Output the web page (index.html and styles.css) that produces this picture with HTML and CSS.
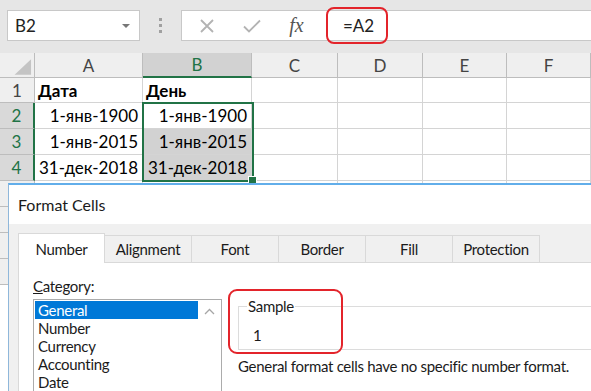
FILE: index.html
```html
<!DOCTYPE html>
<html lang="ru">
<head>
  <meta charset="UTF-8" />
  <title>Excel — Format Cells</title>
  <link rel="stylesheet" href="styles.css">
</head>
<body>
  <div class="app">
    <div class="topbar">
      <div class="namebox"><span>B2</span><span class="caret"></span></div>
      <div class="grip"><i></i><i></i><i></i></div>
      <div class="formula">
        <span class="ficon">
          <svg width="16" height="16" viewBox="0 0 16 16"><path d="M2 2L14 14M14 2L2 14" stroke="#b3b3b3" stroke-width="1.8" fill="none"/></svg>
        </span>
        <span class="ficon">
          <svg width="18" height="14" viewBox="0 0 18 14"><path d="M1 7.5L6 12.5L17 1.5" stroke="#b3b3b3" stroke-width="1.8" fill="none"/></svg>
        </span>
        <span class="ficon fx">fx</span>
        <span class="fvalue">=A2</span>
      </div>
    </div>

    <div class="sheet">
      <div class="cell corner">
        <svg width="35" height="25" viewBox="0 0 35 25"><polygon points="15,22 32,22 32,6" fill="#c4c4c4"/></svg>
      </div>
      <div class="cell hd">A</div>
      <div class="cell hd sel">B</div>
      <div class="cell hd">C</div>
      <div class="cell hd">D</div>
      <div class="cell hd">E</div>
      <div class="cell hd">F</div>

      <div class="cell rh">1</div>
      <div class="cell txt bold">Дата</div>
      <div class="cell txt bold">День</div>
      <div class="cell"></div><div class="cell"></div><div class="cell"></div><div class="cell"></div>

      <div class="cell rh sel">2</div>
      <div class="cell num">1-янв-1900</div>
      <div class="cell num">1-янв-1900</div>
      <div class="cell"></div><div class="cell"></div><div class="cell"></div><div class="cell"></div>

      <div class="cell rh sel">3</div>
      <div class="cell num">1-янв-2015</div>
      <div class="cell num shade">1-янв-2015</div>
      <div class="cell"></div><div class="cell"></div><div class="cell"></div><div class="cell"></div>

      <div class="cell rh sel">4</div>
      <div class="cell num">31-дек-2018</div>
      <div class="cell num shade">31-дек-2018</div>
      <div class="cell"></div><div class="cell"></div><div class="cell"></div><div class="cell"></div>

      <!-- rows under the dialog: only their left edge shows -->
      <div class="cell rh"></div>
      <div class="cell"></div><div class="cell"></div><div class="cell"></div><div class="cell"></div><div class="cell"></div><div class="cell"></div>
      <div class="cell rh"></div>
      <div class="cell"></div><div class="cell"></div><div class="cell"></div><div class="cell"></div><div class="cell"></div><div class="cell"></div>
      <div class="cell rh"></div>
      <div class="cell"></div><div class="cell"></div><div class="cell"></div><div class="cell"></div><div class="cell"></div><div class="cell"></div>
      <div class="cell rh"></div>
      <div class="cell"></div><div class="cell"></div><div class="cell"></div><div class="cell"></div><div class="cell"></div><div class="cell"></div>

      <div class="selection"><span class="handle"></span></div>
    </div>

    <div class="dialog">
      <div class="title">Format Cells</div>
      <div class="dbody">
        <div class="tabs">
          <div class="tab active">Number</div>
          <div class="tab">Alignment</div>
          <div class="tab">Font</div>
          <div class="tab">Border</div>
          <div class="tab">Fill</div>
          <div class="tab">Protection</div>
        </div>
        <div class="panel">
          <div class="left">
            <div class="cat-label"><u>C</u>ategory:</div>
            <div class="listbox">
              <div class="items">
                <div class="item picked">General</div>
                <div class="item">Number</div>
                <div class="item">Currency</div>
                <div class="item">Accounting</div>
                <div class="item">Date</div>
              </div>
              <div class="scroll">
                <svg width="11" height="7" viewBox="0 0 11 7"><path d="M1 6L5.5 1.5L10 6" stroke="#a6a6a6" stroke-width="1.3" fill="none"/></svg>
              </div>
            </div>
          </div>
          <div class="right">
            <fieldset class="sample">
              <legend>Sample</legend>
              <div class="sample-value">1</div>
            </fieldset>
            <div class="mark"></div>
            <div class="desc">General format cells have no specific number format.</div>
          </div>
        </div>
      </div>
    </div>
  </div>
</body>
</html>
```

FILE: styles.css
```css
body { margin: 0; background: #fff; font-family: Lato, "Noto Sans", sans-serif; }
.app { position: relative; width: 591px; height: 391px; overflow: hidden; }

/* formula bar */
.topbar { display: flex; align-items: flex-start; height: 53px; box-sizing: border-box; padding-top: 10px; background: #e6e6e6; }
.namebox { margin-left: 7px; width: 133px; height: 31px; box-sizing: border-box; border: 1px solid #c8c8c8; background: #fff; display: flex; align-items: center; justify-content: space-between; padding: 0 9px 0 7px; font-size: 17px; color: #222; }
.caret { width: 0; height: 0; border-left: 4px solid transparent; border-right: 4px solid transparent; border-top: 4px solid #777; }
.grip { width: 41px; height: 31px; display: flex; flex-direction: column; align-items: center; justify-content: center; gap: 3px; }
.grip i { width: 3px; height: 3px; background: #a0a0a0; }
.formula { flex: 1; height: 31px; box-sizing: border-box; border: 1px solid #c8c8c8; border-right: none; background: #fff; display: flex; align-items: center; padding-left: 2px; }
.ficon { width: 45px; display: flex; justify-content: center; align-items: center; }
.fx { font-family: "Liberation Serif", serif; font-style: italic; font-size: 20px; color: #555; }
.fvalue { margin-left: 7px; width: 62px; height: 37px; box-sizing: border-box; border: 2px solid #e3242b; border-radius: 8px; padding-left: 15px; display: flex; align-items: center; font-size: 17px; color: #222; }

/* grid */
.sheet { position: relative; display: grid; grid-template-columns: 35px 108px 109px 86px 85px 84px 84px; grid-template-rows: 25px 25px repeat(7, 26px); }
.cell { box-sizing: border-box; border-right: 1px solid #d4d4d4; border-bottom: 1px solid #d4d4d4; font-size: 17px; color: #000; display: flex; align-items: center; white-space: nowrap; overflow: hidden; }
.corner { background: #efefef; border-color: #bdbdbd; }
.hd { background: #efefef; border-right-color: #bdbdbd; border-bottom-color: #bdbdbd; justify-content: center; color: #444; }
.hd.sel { background: #d2d2d2; color: #217346; border-bottom: 2px solid #217346; }
.rh { background: #efefef; border-right-color: #bdbdbd; border-bottom-color: #bdbdbd; justify-content: center; color: #444; }
.rh.sel { background: #d9d9d9; color: #217346; border-right: 2px solid #217346; }
.txt { padding-left: 3px; }
.bold { font-weight: bold; }
.num { justify-content: flex-end; padding-right: 4px; }
.shade { background: #d2d2d2; }
.selection { position: absolute; left: 142px; top: 49px; width: 112px; height: 80px; box-sizing: border-box; border: 2px solid #217346; }
.handle { position: absolute; right: -5px; bottom: -5px; width: 7px; height: 7px; background: #217346; border: 1px solid #fff; }

/* dialog */
.dialog { position: absolute; left: 8px; top: 183px; width: 620px; height: 240px; box-sizing: border-box; border: 1px solid #8fb7da; border-top: 2px solid #62aeea; background: #f0f0f0; font-family: Lato, "Noto Sans", sans-serif; font-size: 15px; letter-spacing: -0.3px; color: #1b1b1b; }
.title { height: 39px; background: #fff; padding-left: 9px; display: flex; align-items: center; font-size: 16px; letter-spacing: 0; }
.dbody { padding: 9px 0 0 9px; }
.tabs { display: flex; align-items: flex-end; height: 29px; }
.tab { width: 87px; height: 27px; box-sizing: border-box; border: 1px solid #d9d9d9; border-left: none; border-bottom: none; display: flex; align-items: center; justify-content: center; }
.tab.active { height: 30px; margin-bottom: -1px; background: #fff; border-left: 1px solid #d9d9d9; position: relative; }
.panel { display: flex; gap: 16px; height: 200px; background: #fff; border: 1px solid #d9d9d9; padding: 14px 0 0 14px; }
.left { width: 189px; flex: none; }
.cat-label { height: 18px; line-height: 18px; margin-bottom: 4px; }
.listbox { display: flex; height: 110px; border: 1px solid #acacac; padding: 1px; }
.items { width: 163px; }
.item { height: 18px; line-height: 18px; padding-left: 3px; }
.item.picked { background: #0078d7; color: #fff; }
.scroll { flex: 1; display: flex; justify-content: center; padding-top: 7px; }
.right { flex: 1; position: relative; margin-top: 20px; }
.sample { margin: 0; padding: 0 0 5px 8px; border: 1px solid #dcdcdc; border-right: none; }
.sample legend { padding: 0 1px; line-height: 18px; }
.sample-value { margin: 11px 0 0 6px; line-height: 18px; }
.mark { position: absolute; left: -10px; top: -8px; width: 115px; height: 65px; box-sizing: border-box; border: 2px solid #e3242b; border-radius: 9px; }
.desc { margin-top: 7px; line-height: 18px; }
```
